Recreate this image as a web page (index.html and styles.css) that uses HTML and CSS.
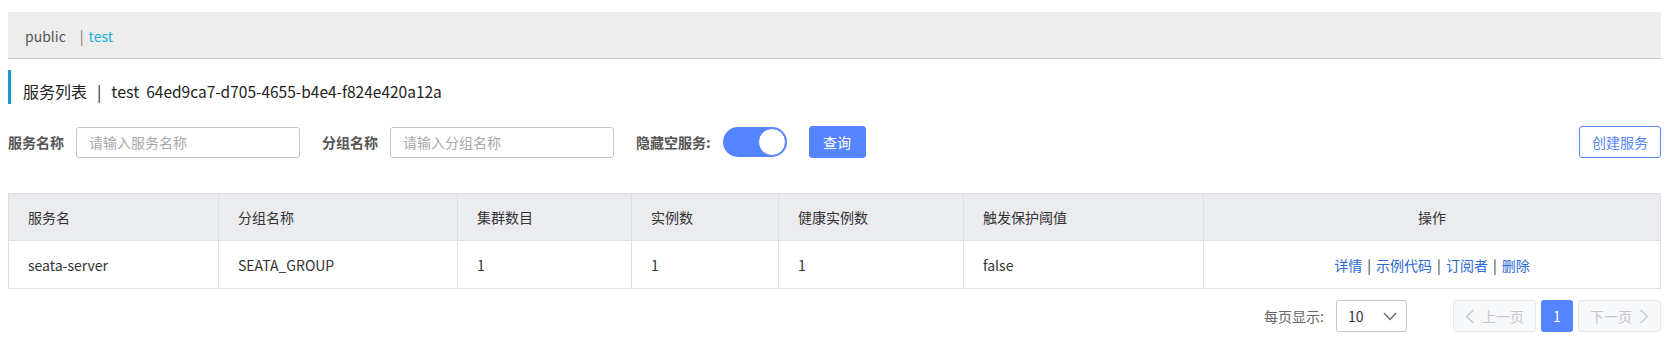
FILE: index.html
```html
<!DOCTYPE html>
<html lang="zh-CN">
<head>
<meta charset="utf-8">
<title>服务列表</title>
<link rel="stylesheet" href="styles.css">
</head>
<body>
<div class="page">
  <div class="ns-bar">
    <span class="ns-item">public</span>
    <span class="ns-sep">|</span>
    <span class="ns-item ns-active">test</span>
  </div>

  <h3 class="page-title">
    <span class="title-main">服务列表</span>
    <span class="title-sep">|</span>
    <span class="title-ns">test</span>
    <span class="title-id">64ed9ca7-d705-4655-b4e4-f824e420a12a</span>
  </h3>

  <form class="filter">
    <div class="field">
      <label class="field-label">服务名称</label>
      <input class="text-input" type="text" placeholder="请输入服务名称">
    </div>
    <div class="field">
      <label class="field-label">分组名称</label>
      <input class="text-input" type="text" placeholder="请输入分组名称">
    </div>
    <div class="field">
      <label class="field-label">隐藏空服务:</label>
      <span class="switch"><span class="switch-knob"></span></span>
    </div>
    <div class="field">
      <button class="btn btn-primary" type="button">查询</button>
    </div>
    <button class="btn btn-outline create-btn" type="button">创建服务</button>
  </form>

  <table class="grid">
    <colgroup>
      <col style="width:210px">
      <col style="width:239px">
      <col style="width:174px">
      <col style="width:147px">
      <col style="width:185px">
      <col style="width:240px">
      <col style="width:457px">
    </colgroup>
    <thead>
      <tr>
        <th>服务名</th>
        <th>分组名称</th>
        <th>集群数目</th>
        <th>实例数</th>
        <th>健康实例数</th>
        <th>触发保护阈值</th>
        <th class="center">操作</th>
      </tr>
    </thead>
    <tbody>
      <tr>
        <td>seata-server</td>
        <td>SEATA_GROUP</td>
        <td>1</td>
        <td>1</td>
        <td>1</td>
        <td>false</td>
        <td class="center">
          <a class="op-link">详情</a><span class="op-sep">|</span><a class="op-link">示例代码</a><span class="op-sep">|</span><a class="op-link">订阅者</a><span class="op-sep">|</span><a class="op-link">删除</a>
        </td>
      </tr>
    </tbody>
  </table>

  <div class="pager">
    <span class="pager-label">每页显示:</span>
    <span class="page-size">
      <span class="page-size-value">10</span>
      <svg class="page-size-arrow" width="14" height="9" viewBox="0 0 14 9"><polyline points="1,1 7,7.5 13,1" fill="none" stroke="#666" stroke-width="1.3"/></svg>
    </span>
    <span class="pager-btn pager-disabled pager-prev">
      <svg class="pager-arrow" width="10" height="15" viewBox="0 0 10 15"><polyline points="8.5,1 1.5,7.5 8.5,14" fill="none" stroke="#c4c6cf" stroke-width="1.3"/></svg>
      上一页
    </span>
    <span class="pager-btn pager-current">1</span>
    <span class="pager-btn pager-disabled pager-next">
      下一页
      <svg class="pager-arrow" width="10" height="15" viewBox="0 0 10 15"><polyline points="1.5,1 8.5,7.5 1.5,14" fill="none" stroke="#c4c6cf" stroke-width="1.3"/></svg>
    </span>
  </div>
</div>
</body>
</html>
```

FILE: styles.css
```css
* {
  box-sizing: border-box;
}

html,
body {
  margin: 0;
  padding: 0;
  background: #fff;
}

body {
  font-family: "Noto Sans CJK SC", "Liberation Sans", sans-serif;
  font-size: 14px;
  color: #333;
}

.page {
  width: 1661px;
  padding: 12px 0 0 8px;
}

/* namespace bar */
.ns-bar {
  display: flex;
  align-items: center;
  height: 47px;
  padding: 2px 0 0 17px;
  background: #ededed;
  border-bottom: 1px solid #c8c8c8;
  line-height: 20px;
}

.ns-item {
  color: #555;
}

.ns-sep {
  color: #8a7760;
  margin: 0 5px 0 14px;
}

.ns-active {
  color: #1fb0de;
}

/* title */
.page-title {
  margin: 11px 0 0;
  height: 34px;
  padding: 8px 0 0 12px;
  border-left: 3px solid #1a98d2;
  font-size: 16px;
  font-weight: normal;
  line-height: 26px;
  color: #222;
  display: flex;
}

.title-sep {
  margin: 0 10px;
}

.title-ns {
  margin-right: 7px;
}

.title-id {
  font-size: 15.5px;
}

/* filter form */
.filter {
  display: flex;
  align-items: center;
  margin: 22px 0 0;
  height: 32px;
}

.field {
  display: flex;
  align-items: center;
  margin-right: 22px;
}

.field-label {
  font-weight: bold;
  color: #555;
  padding-right: 12px;
  line-height: 20px;
}

.text-input {
  width: 224px;
  height: 31px;
  padding: 0 12px;
  border: 1px solid #c4c6cf;
  border-radius: 3px;
  font-family: inherit;
  font-size: 14px;
  color: #333;
  outline: none;
}

.text-input::placeholder {
  color: #a8a8a8;
}

.switch {
  position: relative;
  display: inline-block;
  width: 64px;
  height: 30px;
  border-radius: 15px;
  background: #5584ff;
}

.switch-knob {
  position: absolute;
  top: 1px;
  right: 1px;
  width: 28px;
  height: 28px;
  border-radius: 50%;
  background: #fff;
  border: 1px solid #5584ff;
}

.btn {
  height: 32px;
  padding: 0;
  border-radius: 3px;
  font-family: inherit;
  font-size: 14px;
  line-height: 30px;
  white-space: nowrap;
  cursor: pointer;
}

.btn-primary {
  width: 57px;
  background: #5584ff;
  border: 1px solid #5584ff;
  color: #fff;
}

.btn-outline {
  background: #fff;
  border: 1px solid #5584ff;
  color: #5584ff;
}

.create-btn {
  margin-left: auto;
  width: 82px;
}

/* table */
.grid {
  margin-top: 35px;
  width: 1652px;
  table-layout: fixed;
  border-collapse: collapse;
  border: 1px solid #dcdee3;
}

.grid th,
.grid td {
  border: 1px solid #dcdee3;
  padding: 0 19px;
  text-align: left;
  font-weight: normal;
  color: #333;
  line-height: 20px;
}

.grid th {
  height: 47px;
  background: #ebecf0;
}

.grid td {
  height: 48px;
  background: #fff;
}

.grid .center {
  text-align: center;
}

.op-link {
  color: #2a6ad6;
  cursor: pointer;
}

.op-sep {
  margin: 0 5px;
  color: #333;
}

/* pagination */
.pager {
  display: flex;
  align-items: center;
  justify-content: flex-end;
  margin-top: 11px;
  height: 32px;
}

.pager-label {
  color: #666;
  margin-right: 12px;
}

.page-size {
  display: flex;
  align-items: center;
  justify-content: space-between;
  width: 71px;
  height: 32px;
  padding: 0 9px 0 11px;
  border: 1px solid #c4c6cf;
  border-radius: 3px;
  margin-right: 46px;
}

.page-size-value {
  color: #333;
}

.pager-btn {
  display: flex;
  align-items: center;
  justify-content: center;
  height: 32px;
  border-radius: 3px;
}

.pager-disabled {
  width: 83px;
  background: #f7f8fa;
  border: 1px solid #e6e7eb;
  color: #c4c6cf;
  gap: 7px;
}

.pager-current {
  width: 32px;
  margin: 0 5px;
  background: #5584ff;
  color: #fff;
}
```
